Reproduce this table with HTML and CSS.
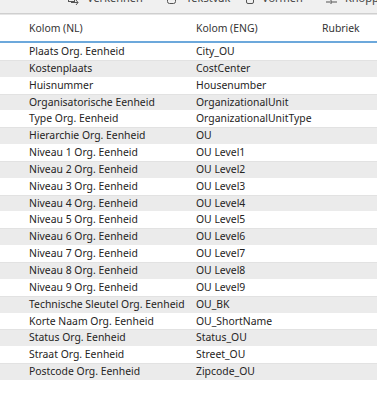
FILE: index.html
```html
<!DOCTYPE html>
<html lang="nl">
<head>
<meta charset="utf-8">
<title>Kolommen</title>
<link rel="stylesheet" href="styles.css">
</head>
<body>
<div class="toolbar">
  <div class="tool t-verkennen">
    <svg class="ico" width="11" height="12" viewBox="0 0 11 12"><rect x="0.5" y="0.5" width="6" height="8" fill="none" stroke="#555"/><path d="M3 9.5h7M8 7l2 2.5-2 2.5" fill="none" stroke="#555"/></svg>
    <span>Verkennen</span>
  </div>
  <div class="tool t-tekstvak">
    <svg class="ico" width="9" height="12" viewBox="0 0 9 12"><rect x="0.5" y="0.5" width="8" height="10" rx="2" fill="none" stroke="#555"/></svg>
    <span>Tekstvak</span>
  </div>
  <div class="tool t-vormen">
    <svg class="ico" width="8" height="12" viewBox="0 0 8 12"><rect x="0.5" y="0.5" width="7" height="10" rx="1.5" fill="none" stroke="#555"/></svg>
    <span>Vormen</span>
  </div>
  <div class="tool t-knoppen">
    <svg class="ico" width="11" height="12" viewBox="0 0 11 12"><path d="M0 9h4M5 6v5M5 9h6" fill="none" stroke="#555"/></svg>
    <span>Knoppen</span>
  </div>
</div>

<div class="table">
  <div class="row head">
    <div class="c1">Kolom (NL)</div><div class="c2">Kolom (ENG)</div><div class="c3">Rubriek</div>
  </div>
  <div class="row"><div class="c1">Plaats Org. Eenheid</div><div class="c2">City_OU</div><div class="c3"></div></div>
  <div class="row"><div class="c1">Kostenplaats</div><div class="c2">CostCenter</div><div class="c3"></div></div>
  <div class="row"><div class="c1">Huisnummer</div><div class="c2">Housenumber</div><div class="c3"></div></div>
  <div class="row"><div class="c1">Organisatorische Eenheid</div><div class="c2">OrganizationalUnit</div><div class="c3"></div></div>
  <div class="row"><div class="c1">Type Org. Eenheid</div><div class="c2">OrganizationalUnitType</div><div class="c3"></div></div>
  <div class="row"><div class="c1">Hierarchie Org. Eenheid</div><div class="c2">OU</div><div class="c3"></div></div>
  <div class="row"><div class="c1">Niveau 1 Org. Eenheid</div><div class="c2">OU Level1</div><div class="c3"></div></div>
  <div class="row"><div class="c1">Niveau 2 Org. Eenheid</div><div class="c2">OU Level2</div><div class="c3"></div></div>
  <div class="row"><div class="c1">Niveau 3 Org. Eenheid</div><div class="c2">OU Level3</div><div class="c3"></div></div>
  <div class="row"><div class="c1">Niveau 4 Org. Eenheid</div><div class="c2">OU Level4</div><div class="c3"></div></div>
  <div class="row"><div class="c1">Niveau 5 Org. Eenheid</div><div class="c2">OU Level5</div><div class="c3"></div></div>
  <div class="row"><div class="c1">Niveau 6 Org. Eenheid</div><div class="c2">OU Level6</div><div class="c3"></div></div>
  <div class="row"><div class="c1">Niveau 7 Org. Eenheid</div><div class="c2">OU Level7</div><div class="c3"></div></div>
  <div class="row"><div class="c1">Niveau 8 Org. Eenheid</div><div class="c2">OU Level8</div><div class="c3"></div></div>
  <div class="row"><div class="c1">Niveau 9 Org. Eenheid</div><div class="c2">OU Level9</div><div class="c3"></div></div>
  <div class="row"><div class="c1">Technische Sleutel Org. Eenheid</div><div class="c2">OU_BK</div><div class="c3"></div></div>
  <div class="row"><div class="c1">Korte Naam Org. Eenheid</div><div class="c2">OU_ShortName</div><div class="c3"></div></div>
  <div class="row"><div class="c1">Status Org. Eenheid</div><div class="c2">Status_OU</div><div class="c3"></div></div>
  <div class="row"><div class="c1">Straat Org. Eenheid</div><div class="c2">Street_OU</div><div class="c3"></div></div>
  <div class="row"><div class="c1">Postcode Org. Eenheid</div><div class="c2">Zipcode_OU</div><div class="c3"></div></div>
</div>
</body>
</html>
```

FILE: styles.css
```css
html, body {
  margin: 0;
  padding: 0;
  background: #fff;
}
body {
  font-family: "Noto Sans", "Open Sans", sans-serif;
  font-size: 10.4px;
  color: #252423;
  width: 377px;
  height: 400px;
  overflow: hidden;
}
.toolbar {
  height: 13px;
  background: #f0f0f0;
  border-bottom: 1px solid #cfcfcf;
  box-shadow: 0 1px 0 #e6e6e6;
  display: flex;
  align-items: flex-end;
  overflow: hidden;
  position: relative;
}
.tool {
  display: flex;
  align-items: flex-end;
  flex: none;
  color: #444;
  font-size: 11px;
  line-height: 13px;
  margin-bottom: 9px;
  white-space: nowrap;
}
.tool .ico { display: block; margin-bottom: -1px; }
.t-verkennen { margin-left: 68px; width: 99px; }
.t-verkennen .ico { margin-right: 8px; }
.t-tekstvak { width: 79px; }
.t-tekstvak .ico { margin-right: 10px; }
.t-vormen { width: 80px; }
.t-vormen .ico { margin-right: 8px; }
.t-knoppen .ico { margin-right: 8px; }

.table {
  margin-top: 1px;
}
.row {
  display: grid;
  grid-template-columns: 196px 126px 1fr;
  height: 16.85px;
  line-height: 16.85px;
  white-space: nowrap;
}
.row .c1 { padding-left: 29px; }
.row:nth-child(odd):not(.head) {
  background: #ebebeb;
  box-shadow: inset 0 1px 0 #e2e2e2;
}
.row.head {
  height: 26px;
  line-height: 26px;
  border-bottom: 2px solid #6ca8db;
  color: #333;
}
```
